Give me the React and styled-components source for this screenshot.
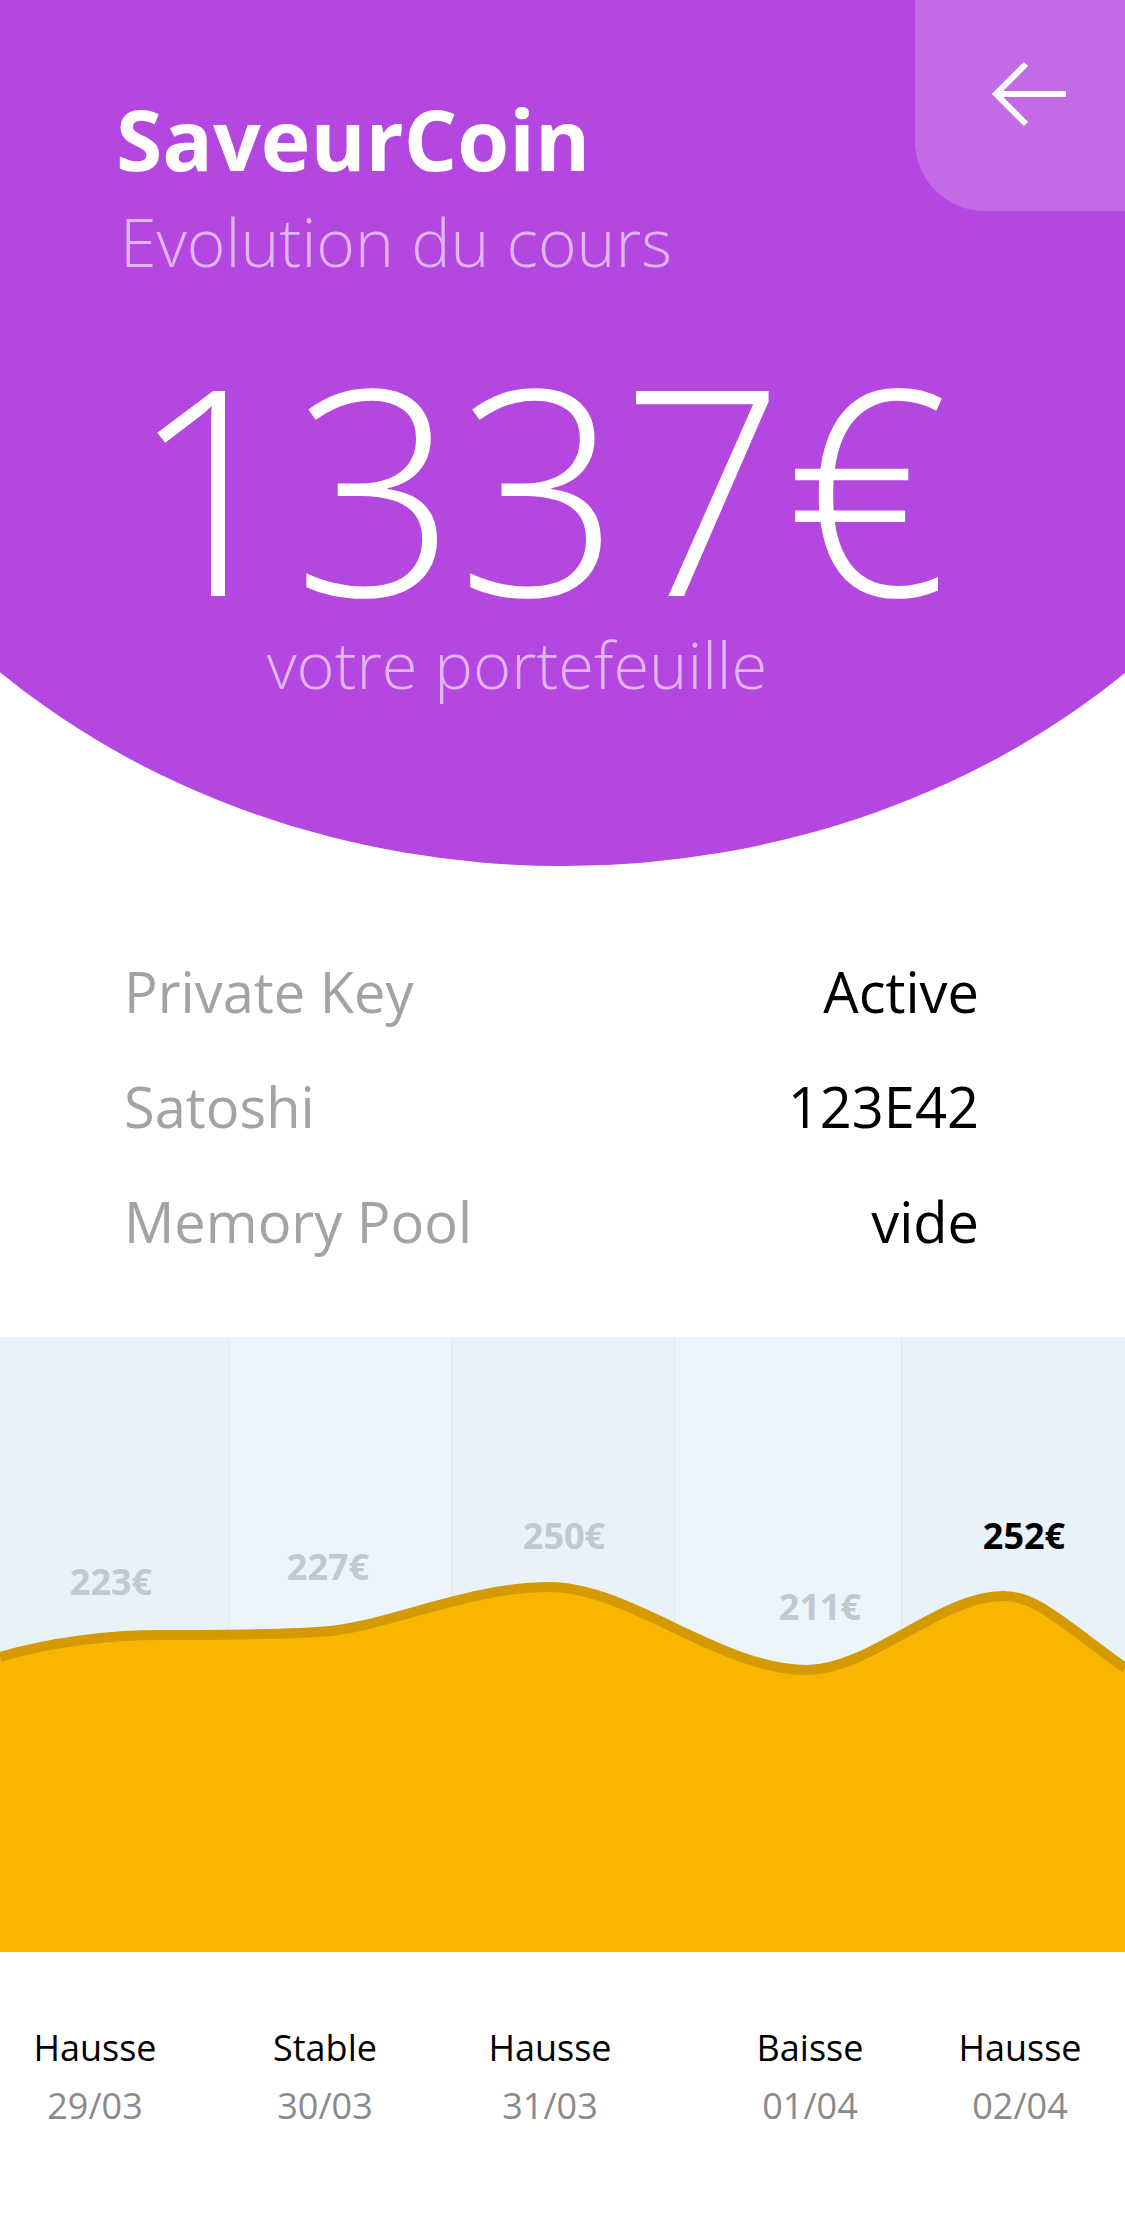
import React from 'react';
import styled, { createGlobalStyle } from 'styled-components';

const GlobalStyle = createGlobalStyle`
  body {
    margin: 0;
    background: #ffffff;
    font-family: 'Open Sans', 'Liberation Sans', sans-serif;
  }
`;

const Page = styled.div`
  width: 1125px;
  overflow: hidden;
`;

const Header = styled.header`
  position: relative;
  height: 866px;
  overflow: hidden;

  &::before {
    content: '';
    position: absolute;
    left: -252px;
    bottom: 0;
    width: 1630px;
    height: 1400px;
    border-radius: 50%;
    background: #b447e0;
  }
`;

const HeaderContent = styled.div`
  position: relative;
  display: flex;
  flex-direction: column;
  padding-top: 97px;
`;

const TitleBlock = styled.div`
  display: flex;
  flex-direction: column;
  gap: 27px;
  padding-left: 116px;
`;

const Title = styled.h1`
  margin: 0;
  font-size: 84px;
  line-height: 84px;
  font-weight: 700;
  color: #ffffff;
`;

const Subtitle = styled.p`
  margin: 0 0 0 4px;
  font-size: 66px;
  line-height: 66px;
  font-weight: 300;
  color: rgba(255, 255, 255, 0.6);
`;

const Amount = styled.div`
  margin-top: 81px;
  padding-right: ${(p) => p.$shift}px;
  text-align: center;
  font-size: 287px;
  line-height: 260px;
  font-weight: 300;
  color: #ffffff;
`;

const Caption = styled.div`
  margin-top: 17px;
  padding-right: ${(p) => p.$shift}px;
  text-align: center;
  font-size: 65px;
  line-height: 65px;
  font-weight: 300;
  color: rgba(255, 255, 255, 0.6);
`;

const BackButton = styled.button`
  position: absolute;
  top: 0;
  right: 0;
  width: 210px;
  height: 211px;
  border: none;
  border-bottom-left-radius: 70px;
  background: rgba(255, 255, 255, 0.2);
  display: flex;
  align-items: flex-start;
  justify-content: flex-start;
  padding: 61px 0 0 74px;
  cursor: pointer;
  z-index: 2;
`;

const InfoList = styled.dl`
  margin: 68px 0 0;
  padding: 0 146px 0 124px;
  display: flex;
  flex-direction: column;
`;

const InfoRow = styled.div`
  display: flex;
  justify-content: space-between;
  align-items: baseline;
  font-size: 56px;
  line-height: 115px;
`;

const InfoLabel = styled.dt`
  color: #a3a3a3;
`;

const InfoValue = styled.dd`
  margin: 0;
  color: #000000;
`;

const Chart = styled.div`
  margin-top: 58px;
  height: 615px;
`;

const Days = styled.div`
  margin-top: 67px;
  display: grid;
  grid-template-columns: 190px 270px 180px 340px 80px;
`;

const Day = styled.div`
  display: flex;
  flex-direction: column;
  align-items: center;
  font-size: 36px;
  line-height: 58px;
  white-space: nowrap;
`;

const Trend = styled.span`
  color: #000000;
`;

const DayDate = styled.span`
  color: #8a8a8a;
`;

const info = [
  ['Private Key', 'Active'],
  ['Satoshi', '123E42'],
  ['Memory Pool', 'vide'],
];

const bands = [
  { x: 0, w: 228, c: '#e9f1f9' },
  { x: 228, w: 223, c: '#ecf4fc' },
  { x: 451, w: 223, c: '#e9f1f9' },
  { x: 674, w: 227, c: '#ecf4fc' },
  { x: 901, w: 224, c: '#e9f1f9' },
];

const prices = [
  { x: 111, y: 258, label: '223€' },
  { x: 328, y: 243, label: '227€' },
  { x: 564, y: 212, label: '250€' },
  { x: 820, y: 283, label: '211€' },
  { x: 1024, y: 212, label: '252€', active: true },
];

const days = [
  ['Hausse', '29/03'],
  ['Stable', '30/03'],
  ['Hausse', '31/03'],
  ['Baisse', '01/04'],
  ['Hausse', '02/04'],
];

const line =
  'M0 320 C50 305 110 298 160 298 C220 298 290 298 330 294 ' +
  'C390 288 470 250 549 250 C630 250 720 333 807 333 ' +
  'C870 333 940 259 1003 259 C1035 259 1055 280 1125 331';

function ArrowLeft() {
  return (
    <svg width="80" height="66" viewBox="0 0 80 66" fill="none">
      <path d="M77 33H7M37 3L7 33L37 63" stroke="#fff" strokeWidth="6" strokeLinejoin="miter" />
    </svg>
  );
}

function PriceChart() {
  return (
    <svg width="1125" height="615" viewBox="0 0 1125 615">
      {bands.map((b) => (
        <rect key={b.x} x={b.x} y="0" width={b.w} height="615" fill={b.c} />
      ))}
      {bands.slice(1).map((b) => (
        <rect key={'l' + b.x} x={b.x} y="0" width="1.5" height="615" fill="#e3ecf5" />
      ))}
      <path d={line + ' L1125 615 L0 615 Z'} fill="#f8b600" />
      <path d={line} fill="none" stroke="#d49a00" strokeWidth="10" />
      {prices.map((p) => (
        <text
          key={p.label}
          x={p.x}
          y={p.y}
          textAnchor="middle"
          fontFamily="'Open Sans', sans-serif"
          fontWeight="700"
          fontSize="36"
          fill={p.active ? '#000000' : '#c2c8cf'}
        >
          {p.label}
        </text>
      ))}
    </svg>
  );
}

export default function App() {
  return (
    <Page>
      <GlobalStyle />
      <Header>
        <BackButton aria-label="Retour">
          <ArrowLeft />
        </BackButton>
        <HeaderContent>
          <TitleBlock>
            <Title>SaveurCoin</Title>
            <Subtitle>Evolution du cours</Subtitle>
          </TitleBlock>
          <Amount $shift={47}>1337€</Amount>
          <Caption $shift={91}>votre portefeuille</Caption>
        </HeaderContent>
      </Header>

      <InfoList>
        {info.map(([label, value]) => (
          <InfoRow key={label}>
            <InfoLabel>{label}</InfoLabel>
            <InfoValue>{value}</InfoValue>
          </InfoRow>
        ))}
      </InfoList>

      <Chart>
        <PriceChart />
      </Chart>

      <Days>
        {days.map(([trend, date]) => (
          <Day key={date}>
            <Trend>{trend}</Trend>
            <DayDate>{date}</DayDate>
          </Day>
        ))}
      </Days>
    </Page>
  );
}
